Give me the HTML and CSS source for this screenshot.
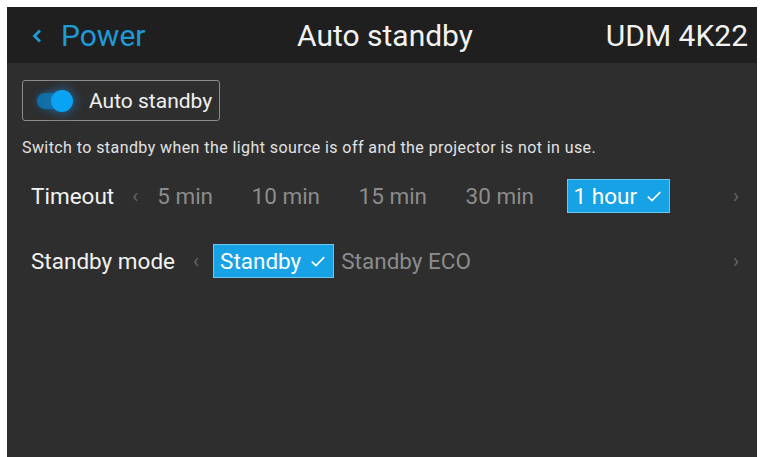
FILE: index.html
```html
<!DOCTYPE html>
<html>
<head>
<meta charset="utf-8">
<link rel="stylesheet" href="styles.css">
</head>
<body>
<div class="screen">
  <header class="topbar">
    <div class="back"><svg class="chev" viewBox="0 0 10 14" width="10" height="14"><path d="M8 1.5 L2.5 7 L8 12.5" fill="none" stroke="currentColor" stroke-width="2.8"/></svg>Power</div>
    <div class="title">Auto standby</div>
    <div class="model">UDM 4K22</div>
  </header>
  <main class="content">
    <div class="toggle-btn">
      <span class="switch"><span class="knob"></span></span>
      <span class="toggle-label">Auto standby</span>
    </div>
    <p class="desc">Switch to standby when the light source is off and the projector is not in use.</p>
    <div class="row row-timeout">
      <span class="row-label">Timeout</span>
      <span class="arrow">&#8249;</span>
      <div class="options opts-timeout">
        <span class="opt">5 min</span>
        <span class="opt">10 min</span>
        <span class="opt">15 min</span>
        <span class="opt">30 min</span>
        <span class="opt sel">1 hour <svg class="check" viewBox="0 0 16 16" width="18" height="18"><path d="M2.5 8.5 L6.2 12 L13.5 4.5" fill="none" stroke="currentColor" stroke-width="1.5"/></svg></span>
      </div>
      <span class="arrow right">&#8250;</span>
    </div>
    <div class="row row-mode">
      <span class="row-label">Standby mode</span>
      <span class="arrow">&#8249;</span>
      <div class="options opts-mode">
        <span class="opt sel">Standby <svg class="check" viewBox="0 0 16 16" width="18" height="18"><path d="M2.5 8.5 L6.2 12 L13.5 4.5" fill="none" stroke="currentColor" stroke-width="1.5"/></svg></span>
        <span class="opt">Standby ECO</span>
      </div>
      <span class="arrow right">&#8250;</span>
    </div>
  </main>
</div>
</body>
</html>
```
FILE: styles.css
```css
html, body {
  margin: 0;
  padding: 0;
  background: #ffffff;
  height: 100%;
  overflow: hidden;
}
body {
  font-family: Roboto, "Liberation Sans", sans-serif;
}
.screen {
  margin: 7px 0 0 7px;
  width: 750px;
  height: 450px;
  background: #2e2e2e;
  display: flex;
  flex-direction: column;
}
.topbar {
  height: 56px;
  background: #1f1f1f;
  display: flex;
  align-items: center;
  padding: 0 9px 0 25px;
  font-size: 30px;
  color: #f2f2f2;
}
.back {
  color: #1f9ad8;
  flex: 1;
  display: flex;
  align-items: center;
}
.chev {
  margin-right: 19px;
  margin-top: 1px;
}
.title {
  flex: none;
  margin-right: 10px;
}
.model {
  flex: 1;
  text-align: right;
}
.content {
  padding: 17px 0 0 15px;
  display: flex;
  flex-direction: column;
}
.toggle-btn {
  border: 1px solid #8c8c8c;
  border-radius: 3px;
  display: flex;
  align-items: center;
  box-sizing: border-box;
  width: 198px;
  height: 41px;
  padding-left: 14px;
}
.switch {
  width: 34px;
  height: 16px;
  border-radius: 8px;
  background: #0f6fa8;
  position: relative;
  box-shadow: 0 0 6px rgba(20,120,190,0.6);
}
.knob {
  position: absolute;
  right: -2px;
  top: -3px;
  width: 22px;
  height: 22px;
  border-radius: 50%;
  background: #0aa2f2;
  box-shadow: 0 0 8px 4px rgba(40,110,170,0.45);
}
.toggle-label {
  margin-left: 18px;
  font-size: 21px;
  color: #f0f0f0;
}
.desc {
  margin: 17px 0 0 0;
  font-size: 16px;
  letter-spacing: 0.42px;
  color: #e2e2e2;
}
.row {
  display: flex;
  align-items: center;
  height: 36px;
  padding-left: 9px;
  padding-right: 18px;
}
.row-timeout {
  margin-top: 21px;
}
.row-mode {
  margin-top: 29px;
}
.row-label {
  font-size: 22.5px;
  color: #f2f2f2;
}
.arrow {
  font-size: 20px;
  color: #666;
  margin-left: 18px;
}
.arrow.right {
  margin-left: auto;
}
.options {
  display: flex;
  align-items: center;
  font-size: 22.5px;
  color: #8c8c8c;
}
.opts-timeout {
  margin-left: 19px;
  gap: 38.5px;
}
.opts-timeout .sel {
  margin-left: -6px;
}
.opts-mode {
  margin-left: 14px;
  gap: 7px;
}
.opt {
  display: flex;
  align-items: center;
  height: 34px;
}
.opt.sel {
  background: #17a2e6;
  color: #ffffff;
  padding: 0 6px 0 6px;
  border: 1px solid #6cc6f2;
  box-sizing: border-box;
}
.check {
  margin-left: 8px;
}
```
